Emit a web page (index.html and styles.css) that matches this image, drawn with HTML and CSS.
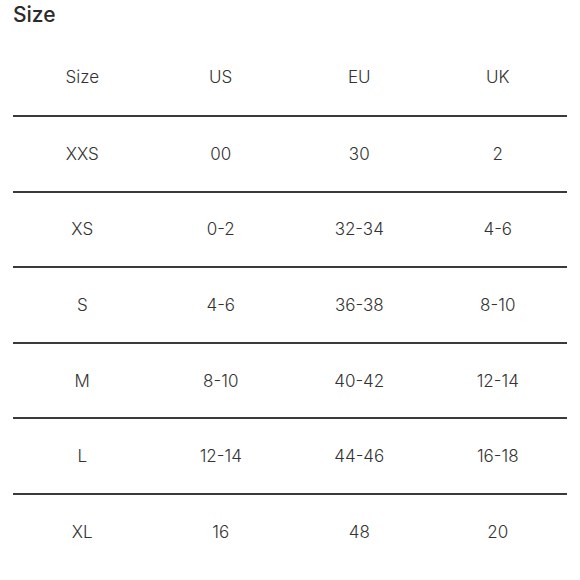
FILE: index.html
```html
<!DOCTYPE html>
<html>
<head>
<meta charset="utf-8">
<link rel="stylesheet" href="styles.css">
</head>
<body>
<div class="page">
  <h1 class="title">Size</h1>
  <table class="sizes">
    <thead>
      <tr><th>Size</th><th>US</th><th>EU</th><th>UK</th></tr>
    </thead>
    <tbody>
      <tr><td>XXS</td><td>00</td><td>30</td><td>2</td></tr>
      <tr><td>XS</td><td>0-2</td><td>32-34</td><td>4-6</td></tr>
      <tr><td>S</td><td>4-6</td><td>36-38</td><td>8-10</td></tr>
      <tr><td>M</td><td>8-10</td><td>40-42</td><td>12-14</td></tr>
      <tr><td>L</td><td>12-14</td><td>44-46</td><td>16-18</td></tr>
      <tr><td>XL</td><td>16</td><td>48</td><td>20</td></tr>
    </tbody>
  </table>
</div>
</body>
</html>
```
FILE: styles.css
```css
html, body {
  margin: 0;
  padding: 0;
  background: #fff;
}
.page {
  padding: 0 13px 0 13px;
  font-family: Inter, "Noto Sans", sans-serif;
  color: #333;
}
.title {
  margin: 0 0 9px 0;
  font-size: 21px;
  line-height: 30px;
  font-weight: 500;
  color: #2b2b2b;
}
.sizes {
  width: 554px;
  border-collapse: collapse;
  table-layout: fixed;
}
.sizes th,
.sizes td {
  text-align: center;
  font-size: 17px;
  font-weight: 300;
  padding: 0;
  border-bottom: 2px solid #3a3a3a;
}
.sizes th {
  height: 76px;
}
.sizes td {
  height: 73.6px;
}
.sizes tbody tr:last-child td {
  border-bottom: none;
}
```
